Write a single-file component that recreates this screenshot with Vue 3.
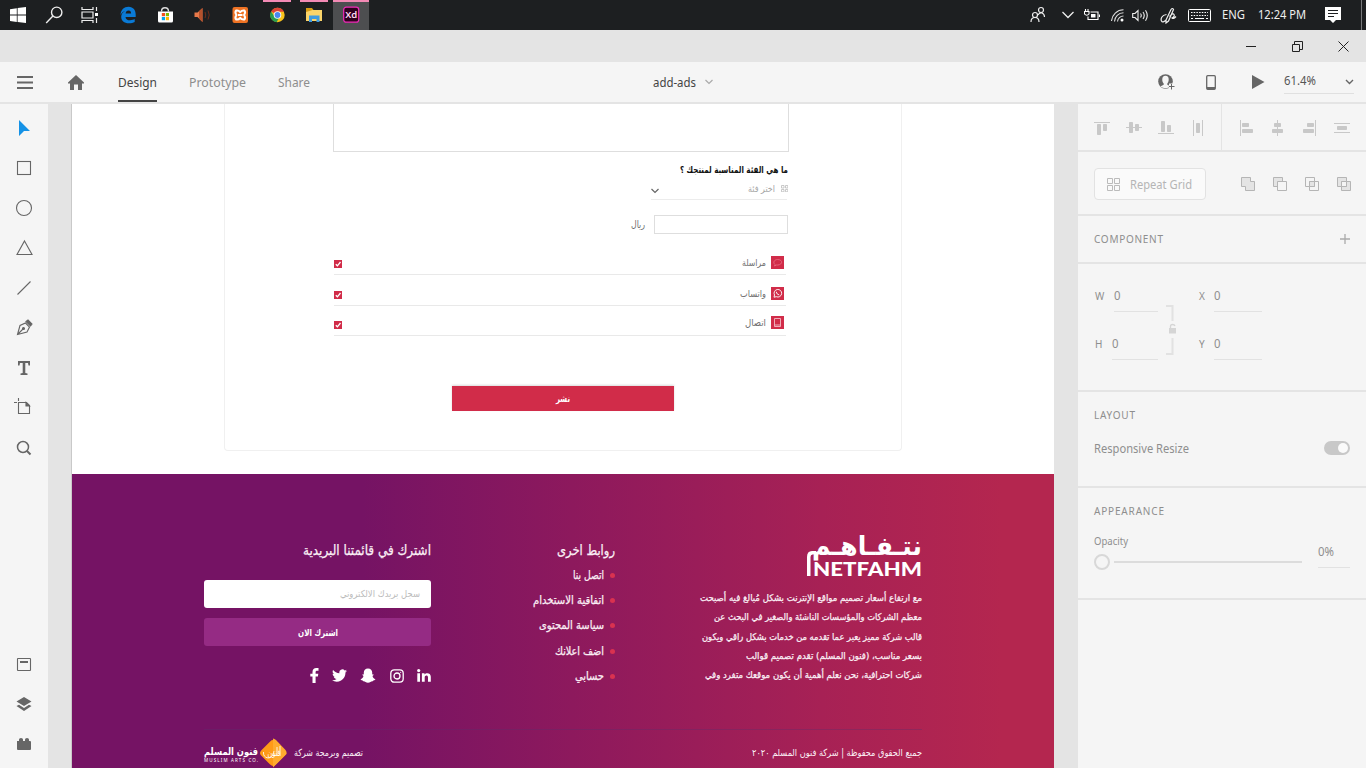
<script setup>
import { h } from 'vue'

// Single line of text fitted to a given width: w/h box, b baseline, s font size,
// adj chooses between stretching glyphs and only spacing them.
const Fit = (p) =>
  h('svg', { width: p.w, height: p.h, style: { display: 'block', overflow: 'visible', flex: 'none' } }, [
    h('text', {
      x: p.w / 2, y: p.b, 'text-anchor': 'middle', 'font-size': p.s, fill: 'currentColor',
      textLength: p.w, lengthAdjust: p.adj || 'spacingAndGlyphs'
    }, p.t)
  ])
Fit.props = ['t', 'w', 'h', 'b', 's', 'adj']

const alignA = [
  { l: 'M0 2.5H16', r: [[3, 4, 4, 11], [9, 4, 4, 7]] },
  { l: 'M0 7.5H16', r: [[3, 2, 4, 11], [9, 4, 4, 7]] },
  { l: 'M0 13.5H16', r: [[3, 1, 4, 11], [9, 5, 4, 7]] },
  { l: 'M3.5 0V16M12.5 0V16', r: [[6, 3, 4, 10]] }
]
const alignB = [
  { l: 'M2.5 0V16', r: [[4, 3, 7, 4], [4, 9, 11, 4]] },
  { l: 'M7.5 0V16', r: [[4, 3, 7, 4], [2, 9, 11, 4]] },
  { l: 'M13.5 0V16', r: [[5, 3, 7, 4], [1, 9, 11, 4]] },
  { l: 'M0 3.5H16M0 12.5H16', r: [[3, 6, 10, 4]] }
]
const fields = [
  { k: 'W', c: 'fw' }, { k: 'X', c: 'fx' }, { k: 'H', c: 'fh' }, { k: 'Y', c: 'fx' }
]
const options = [
  { t: 'مراسلة', w: 24, k: 'chat' },
  { t: 'واتساب', w: 26, k: 'whats' },
  { t: 'اتصال', w: 21, k: 'phone' }
]
const links = [
  { t: 'اتصل بنا', w: 31 }, { t: 'اتفاقية الاستخدام', w: 71 }, { t: 'سياسة المحتوى', w: 65 },
  { t: 'اضف اعلانك', w: 49 }, { t: 'حسابي', w: 29 }
]
const about = [
  { t: 'مع ارتفاع أسعار تصميم مواقع الإنترنت بشكل مُبالغ فيه أصبحت', w: 222 },
  { t: 'معظم الشركات والمؤسسات الناشئة والصغير في البحث عن', w: 208 },
  { t: 'قالب شركة مميز يعبر عما تقدمه من خدمات بشكل راقي ويكون', w: 220 },
  { t: 'بسعر مناسب، (فنون المسلم) تقدم تصميم قوالب', w: 176 },
  { t: 'شركات احترافية، نحن نعلم أهمية أن يكون موقعك متفرد وفي', w: 217 }
]
</script>

<template>
  <div class="screen">
    <header class="taskbar">
      <div class="cell s"><svg width="24" height="24"><path fill="#fff" d="M4 6.2 10.8 5.200V11.600H4zM11.600 5.100 20 4V11.600H11.600zM4 12.400H10.800V18.900L4 17.900zM11.600 12.400H20V20L11.600 19z"/></svg></div>
      <div class="cell s"><svg width="24" height="24" fill="none" stroke="#eee" stroke-width="1.400"><circle cx="13.700" cy="9.300" r="5.200"/><path d="M9.900 13.100 3.200 20"/></svg></div>
      <div class="cell s"><svg width="24" height="24" fill="none" stroke="#eee" stroke-width="1.200"><path d="M3 4V6.500H14V4M3 20V17.500H14V20M3 9H14V15H3zM17.500 4V8M17.500 15V20"/><path d="M16 10h3v3h-3z" fill="#fff" stroke="none"/></svg></div>
      <div class="cell"><svg width="24" height="24"><path fill="#0a7ad6" d="M4.500 12C5 6.500 8 3.800 12.500 3.800c5 0 7.200 3.700 7.200 7.700V14H9.500c.2 2.500 2 3.300 4.500 3.300 2 0 3.600-.5 4.700-1.200V19c-1.500.8-3.500 1.300-5.700 1.300-5 0-7.800-2.600-7.800-6.500 0-2.700 1.500-4.700 4-5.800C7.300 8.500 5.500 9.700 4.500 12zM9.600 10.600h5.500c0-2-.8-3.100-2.500-3.100-1.800 0-2.700 1.200-3 3.100z"/></svg></div>
      <div class="cell"><svg width="24" height="24"><path d="M8.500 8.500C8.500 3.500 15.500 3.500 15.500 8.500" fill="none" stroke="#ddd" stroke-width="1.400"/><path fill="#fff" d="M5 8.500h15v9.500a1.500 1.500 0 0 1-1.500 1.500h-12a1.500 1.500 0 0 1-1.500-1.500z"/><path fill="#f25022" d="M8.800 10h3.200v3.200H8.800z"/><path fill="#7fba00" d="M12.800 10H16v3.200h-3.200z"/><path fill="#00a4ef" d="M8.800 14H12v3.200H8.800z"/><path fill="#ffb900" d="M12.800 14H16v3.200h-3.200z"/></svg></div>
      <div class="cell"><svg width="24" height="24"><path fill="#e8794a" d="M4.500 9.500H7.500L12.500 5V19L7.500 14H4.500z"/><path fill="#b5512c" d="M9 8.200 12.500 5V19L9 15.500z"/><path d="M15 9q1.500 3 0 6M18 7.500q2.500 4.500 0 9" stroke="#6b2c1a" fill="none"/></svg></div>
      <div class="cell"><svg class="nudge" width="24" height="24"><rect x="4.500" y="4" width="15.500" height="16" rx="2" fill="#ee7223"/><path fill="none" stroke="#fff" stroke-width="2" stroke-linejoin="round" d="M12.200 9.200Q10.500 7 8.200 7.500 6.500 9.500 8.500 12 6.500 14.500 8.200 16.500 10.500 17 12.200 14.800 14 17 16.300 16.500 18 14.500 16 12 18 9.500 16.300 7.500 14 7 12.200 9.200zM10 12H14.500"/></svg></div>
      <div class="cell on"><svg width="24" height="24"><circle cx="12.500" cy="12" r="7.200" fill="#f8c21a"/><path fill="#de4436" d="M12.500 12 6 8.500a7.300 7.300 0 0 1 13 .3H12.500z"/><path fill="#2a9d4f" d="M6 8.500a7.200 7.200 0 0 0 5.600 10.700L14.500 14 10 14z"/><circle cx="12.500" cy="12" r="3.800" fill="#fff"/><circle cx="12.500" cy="12" r="2.900" fill="#4a88ee"/></svg></div>
      <div class="cell on"><svg width="24" height="24"><path fill="#d79b14" d="M4 5h6l1.500 2v3H4z"/><path fill="#fad46a" d="M4 9 10.500 7H20v11H4z"/><path fill="#3f9be0" d="M7 12.500h10.500V19h-3v-3H10v3H7z"/></svg></div>
      <div class="cell on active"><svg width="24" height="24"><rect x="4.700" y="4.200" width="15" height="15" rx="2.500" fill="#2e001e" stroke="#f02bb8" stroke-width="1.200"/><text x="12.200" y="15.300" text-anchor="middle" font-size="9.500" font-weight="600" fill="#ffd9f2">Xd</text></svg></div>
      <div class="tray">
        <svg class="t1" width="16" height="18" fill="none" stroke="#eee" stroke-width="1.200"><circle cx="5" cy="9" r="2.500"/><path d="M1 16c0-6 8-6 8 0"/><circle cx="11" cy="4" r="2.500"/><path d="M8 9c2-4 6.500-2 6.500 2"/></svg>
        <svg class="t2" width="12" height="8" fill="none" stroke="#eee" stroke-width="1.300"><path d="M.5 1 6 6.500 11.500 1"/></svg>
        <svg class="t3" width="16" height="13" fill="none" stroke="#fff" stroke-width="1.100"><path d="M6.500 3H14V10.500H4V7.500M15.500 5.500V8M1.500 0V2.500M4 0V2.500M.5 2.500H5V5Q2.700 7.500.5 5z"/><path d="M7 5h4.500v3.500H7z" fill="#fff" stroke="none"/></svg>
        <svg class="t4" width="13" height="13" fill="none" stroke="#ddd" stroke-width="1.100"><path d="M.5 12A12 12 0 0 1 12.500.8M3.500 12.500A9 9 0 0 1 12.500 3.800M6.500 12.500A6 6 0 0 1 12.500 7"/><circle cx="11" cy="11" r="1.500" fill="#fff" stroke="none"/></svg>
        <svg class="t5" width="17" height="13" fill="none" stroke="#eee" stroke-width="1.100"><path d="M.7 4.500H3L6 1.500V11.500L3 8.500H.7zM8.500 4.500q1.500 2 0 4M11 3q2.500 3.500 0 7M13.500 1.200q3.500 5.300 0 10.600"/></svg>
        <svg class="t6" width="17" height="17" fill="none" stroke="#eee" stroke-width="1.200"><path d="M6 13 11 2.500Q12.500.5 13.500 2.500L8.500 14 6 16zM6.500 7.500C1.500 8 .5 12 1.500 14S5 14 6 13M9.500 9.500Q13 5.500 14 7.500T12 11Q13.500 12.500 16 9.500"/></svg>
        <svg class="t7" width="23" height="13" fill="none" stroke="#fff"><rect x=".5" y=".5" width="22" height="12" rx="1"/><path d="M3 3.500H20M3 6.500H20" stroke-dasharray="1.500 1.200"/><path d="M3 9.500H5M7 9.500H16M18 9.500H20"/></svg>
        <Fit class="t8" t="ENG" :w="23" :h="18" :b="13.300" :s="12.500" />
        <Fit class="t9" t="12:24 PM" :w="48" :h="18" :b="13.300" :s="12.500" />
        <svg class="t10" width="16" height="16"><path fill="#fff" d="M0 0h16v13h-5l-3 3-3-3H0z"/><path stroke="#1d1f21" d="M3 3.500H13M3 6.500H13M3 9.500H9"/></svg>
        <i class="peek"></i>
      </div>
    </header>

    <div class="titlebar">
      <svg width="10" height="10" stroke="#222"><path d="M0 5.500H10"/></svg>
      <svg width="11" height="11" fill="none" stroke="#222"><path d="M.5 3.500H7.500V10.500H.5zM2.500 3V.5H10.500V8.500H8"/></svg>
      <svg width="11" height="11" fill="none" stroke="#222"><path d="M.5.500 10.500 10.500M10.500.5.500 10.500"/></svg>
    </div>

    <nav class="toolbar">
      <svg class="burger" width="16" height="13" stroke="#666" stroke-width="1.800"><path d="M0 1H16M0 6.500H16M0 12H16"/></svg>
      <svg class="home" width="16" height="15" fill="#666"><path d="M8 0 16 7.500V8.500H14V15H10V9.500H6V15H2V8.500H0V7.500z"/></svg>
      <div class="tab cur"><Fit t="Design" :w="39" :h="20" :b="15.500" :s="13.300" /></div>
      <div class="tab"><Fit t="Prototype" :w="57" :h="20" :b="15.500" :s="13.300" /></div>
      <div class="tab"><Fit t="Share" :w="32" :h="20" :b="15.500" :s="13.300" /></div>
      <div class="doc"><Fit t="add-ads" :w="43" :h="20" :b="14.800" :s="12.500" /><svg width="8" height="6" fill="none" stroke="#aaa" stroke-width="1.200"><path d="M.5 1 4 4.500 7.500 1"/></svg></div>
      <div class="actions">
        <svg width="18" height="16"><circle cx="7.500" cy="7.500" r="7.300" fill="#666"/><path fill="#f5f5f5" d="M7.500 1.800c4.500 0 3.500 6.500 1.800 7.700v1.200l3.500 1.800q-5.300 3.500-10.600 0l3.500-1.800V9.500C4 8.300 3 1.800 7.500 1.800z"/><path fill="#f5f5f5" d="M11 9.500h7v6.500h-7z"/><path stroke="#666" d="M11 12.500H16.500M13.500 10V15.500"/></svg>
        <svg class="mob" width="10" height="15"><rect x=".7" y=".7" width="8.600" height="13.600" rx="1" fill="none" stroke="#666" stroke-width="1.300"/><path d="M1 12H9V14H1z" fill="#666"/></svg>
        <svg class="play" width="13" height="14" fill="#666"><path d="M0 0 12.500 7 0 14z"/></svg>
        <div class="zoom"><Fit t="61.4%" :w="32" :h="18" :b="13.500" :s="12.500" /><svg width="9" height="6" fill="none" stroke="#666" stroke-width="1.400"><path d="M1 1 4.500 4.500 8 1"/></svg></div>
      </div>
    </nav>

    <main class="work">
      <aside class="tools">
        <svg width="24" height="24"><path fill="#1592e6" d="M7 4 18 15H12L7 20z"/></svg>
        <svg width="24" height="24" class="ln"><rect x="5.500" y="5.500" width="13" height="13"/></svg>
        <svg width="24" height="24" class="ln"><circle cx="12" cy="12" r="7.500"/></svg>
        <svg width="24" height="24" class="ln"><path d="M12.500 5 20 18.500H5z"/></svg>
        <svg width="24" height="24" class="ln"><path d="M5.500 18.500 18.500 5.500"/></svg>
        <svg width="24" height="24" class="ln"><path d="M5.500 18.500 8 9.500 13.500 7 17.500 11 15 16zM5.500 18.500 11 13"/><circle cx="11.500" cy="12.500" r="1" fill="#666"/><path d="M14 5.500 16 4 20 8 18.500 10z" fill="#666"/></svg>
        <svg width="24" height="24"><path fill="#666" d="M6 5H18V9.500H16.500L16 7H13.300V17L15.500 17.500V19H8.500V17.500L10.700 17V7H8L7.500 9.500H6z"/></svg>
        <svg width="24" height="24" class="ln"><path d="M6.500 6.500H14.500L17.500 9.500V17.500H6.500zM14.500 6.500V9.500H17.500M2 6.500H5M6.500 2V5"/><path d="M14 6.500 17.500 10H14z" fill="#666"/></svg>
        <svg width="24" height="24" class="ln"><circle cx="11" cy="11" r="5.500" stroke-width="1.500"/><path d="M15 15 18.500 18.500" stroke-width="2"/></svg>
        <div class="bottom">
          <svg width="24" height="24" class="ln"><rect x="5.500" y="6.500" width="13" height="12" rx=".5"/><path d="M8 10H16" stroke-width="2"/></svg>
          <svg width="24" height="24" fill="#666"><path d="M12 5 19.500 9.500 12 14 4.500 9.500zM4.500 14 7 12.700 12 16 17 12.700 19.500 14 12 19z"/></svg>
          <svg width="24" height="24" fill="#666"><path d="M5 9H7V7.500Q7 6 9 6T11 7.500V9H13V7.500Q13 6 15 6T17 7.500V9H18Q19 9 19 10V17Q19 18 18 18H6Q5 18 5 17z"/></svg>
        </div>
      </aside>

      <section class="canvas">
        <div class="artboard">
          <div class="card">
            <div class="area"></div>
            <Fit class="question ar" t="ما هي الفئة المناسبة لمنتجك ؟" :w="108" :h="14" :b="10" :s="9.300" />
            <div class="select">
              <svg class="chev" width="8" height="6" fill="none" stroke="#666" stroke-width="1.200"><path d="M.5 1 4 4.500 7.500 1"/></svg>
              <Fit class="ar" t="اختر فئة" :w="27" :h="12" :b="8" :s="9.500" />
              <svg class="grid" width="7" height="7" fill="none" stroke="#bbb" stroke-width=".8"><path d="M.5.500H3V3H.5zM4.500.5H6.800V3H4.500zM.5 4.500H3V6.800H.5zM4.500 4.500H6.800V6.800H4.500z"/></svg>
            </div>
            <div class="price"><Fit class="ar" t="ريال" :w="14" :h="14" :b="9.500" :s="10" /><div class="box"></div></div>
            <div class="opts">
              <div v-for="o in options" :key="o.k" class="opt" :class="o.k">
                <svg class="check" width="8" height="8"><path fill="#d12c49" d="M0 0h8v8H0z"/><path d="M1.800 4.200 3.400 5.800 6.500 2" fill="none" stroke="#fff" stroke-width="1.300"/></svg>
                <Fit class="ar" :t="o.t" :w="o.w" :h="13" :b="9.500" :s="9.800" />
                <svg width="13" height="13" fill="none" stroke="#f3b9c4" stroke-width=".9"><path d="M0 0h13v13H0z" fill="#d12c49" stroke="none"/>
                  <path v-if="o.k === 'chat'" stroke="#e8697f" d="M3.500 10 4 8.500C1.500 6.500 3.500 3.500 6.500 3.500S11 5 10.500 6.800 7 9.300 5.500 9z"/>
                  <g v-else-if="o.k === 'whats'" stroke="#fff"><path d="M3 10.200 3.500 8A3.800 3.800 0 1 1 5.300 9.700z"/><path d="M5.200 4.700Q5.500 7.500 8.300 8"/></g>
                  <path v-else d="M3.500 2.500H9.500V10.500H3.500zM3.500 9H9.500"/>
                </svg>
              </div>
            </div>
            <div class="publish"><Fit class="ar" t="نشر" :w="14" :h="14" :b="10.500" :s="9.500" /></div>
          </div>

          <footer class="foot">
            <div class="cols">
              <div class="news">
                <Fit class="ar" t="اشترك في قائمتنا البريدية" :w="128" :h="20" :b="13" :s="14" />
                <div class="mail"><Fit class="ar" t="سجل بريدك الالكتروني" :w="80" :h="16" :b="11" :s="9.500" /></div>
                <div class="sub"><Fit class="ar" t="اشترك الان" :w="40" :h="16" :b="11.500" :s="9.300" /></div>
                <div class="social">
                  <svg width="9" height="15" fill="#fff"><path d="M2.500 15V8.500H.3V5.700H2.500V4C2.500 1.300 4 0 6.300 0 7.500 0 8.500.1 8.500.1V2.700H7.200C6 2.700 5.600 3.300 5.600 4.100V5.700H8.300L7.900 8.500H5.600V15z"/></svg>
                  <svg width="15" height="13" viewBox="0 2 24 20" fill="#fff"><path d="M24 4.600c-.9.400-1.800.7-2.800.8 1-.6 1.800-1.600 2.200-2.700-1 .6-2 1-3.100 1.200A4.900 4.900 0 0 0 11.900 8.400C7.800 8.200 4.200 6.200 1.700 3.200.4 5.400 1 8.300 3.200 9.700c-.8 0-1.600-.2-2.200-.6 0 2.300 1.600 4.400 3.900 4.900-.7.200-1.500.2-2.200.1.600 2 2.400 3.400 4.600 3.400A9.900 9.900 0 0 1 0 19.500 14 14 0 0 0 21.500 7.100c1-.7 1.800-1.600 2.500-2.500z"/></svg>
                  <svg width="16" height="15" fill="#fff"><path d="M8 .5C10.700.5 12.200 2.300 12.200 4.500V6.500L13.300 6.300 13.600 7 12.500 8C13 9.800 13.800 10.600 15.500 11.200 15 12.200 13.600 12.300 13.200 12.500L12.800 13.300C11 13 10.300 14.800 8 14.800S5 13 3.200 13.300L2.800 12.500C2.400 12.300 1 12.200.5 11.200 2.200 10.600 3 9.800 3.500 8L2.400 7 2.700 6.300 3.800 6.500V4.500C3.800 2.300 5.300.5 8 .5z"/></svg>
                  <svg width="14" height="14" fill="none" stroke="#fff" stroke-width="1.300"><rect x=".8" y=".8" width="12.400" height="12.400" rx="3.400"/><circle cx="7" cy="7" r="3"/><circle cx="10.700" cy="3.300" r=".6" fill="#fff" stroke="none"/></svg>
                  <svg width="14" height="13" fill="#fff"><path d="M.3 4.300H3V12.800H.3zM4.900 4.300H7.500V5.500C8.800 3.400 13.800 3.400 13.800 7.700V12.800H11V8.400C11 5.700 7.700 6 7.700 8.400V12.800H4.900z"/><circle cx="1.700" cy="1.600" r="1.600"/></svg>
                </div>
              </div>
              <div class="links">
                <Fit class="ar head" t="روابط اخرى" :w="58" :h="20" :b="13" :s="14" />
                <div v-for="l in links" :key="l.t" class="link"><Fit class="ar" :t="l.t" :w="l.w" :h="25" :b="16" :s="11.300" /><i></i></div>
              </div>
              <div class="about">
                <svg class="logo" width="115" height="42" fill="#fff">
                  <text class="ar" x="60" y="19.500" text-anchor="middle" font-size="26" font-weight="700" textLength="110" lengthAdjust="spacingAndGlyphs">نتـفـاهـم</text>
                  <path d="M0 41V22Q0 16 5 16H9V19.500H5.500Q3.500 19.500 3.500 22V41z"/>
                  <text x="60.500" y="41" text-anchor="middle" font-size="19.500" font-weight="900" font-family="Lato, sans-serif" textLength="109" lengthAdjust="spacingAndGlyphs">NETFAHM</text>
                </svg>
                <Fit v-for="a in about" :key="a.t" class="ar" :t="a.t" :w="a.w" :h="19.300" :b="11.800" :s="9.300" />
              </div>
            </div>
            <div class="legal">
              <div class="brand">
                <Fit class="ar bold" t="فنون المسلم" :w="54" :h="16" :b="11" :s="10.500" />
                <Fit t="MUSLIM ARTS CO." :w="54" :h="6" :b="2" :s="4.500" adj="spacing" />
              </div>
              <svg class="gem" width="28" height="30"><rect x="3.800" y="4.800" width="20.400" height="20.400" rx="4" fill="#ff9a17" transform="rotate(45 14 15)"/><path d="M14 15V.5Q15.500.5 17 2L26.500 12Q28 14 27.500 16L14 29.500z" fill="#ffab2e"/><text class="ar" x="15" y="17.500" text-anchor="middle" font-size="10" fill="#fff" textLength="13" lengthAdjust="spacingAndGlyphs">فنون</text><path d="M4.500 14Q4 19 9 20 14 20 15 13M18 9V18M21 8V18" fill="none" stroke="#fff0d8" stroke-width="1"/></svg>
              <Fit class="ar by" t="تصميم وبرمجة شركة" :w="69" :h="16" :b="11" :s="9.800" />
              <Fit class="ar copy" t="جميع الحقوق محفوظة | شركة فنون المسلم ٢٠٢٠" :w="170" :h="16" :b="11" :s="9.800" />
            </div>
          </footer>
        </div>
      </section>

      <aside class="panel">
        <div class="sec align">
          <div class="grp"><svg v-for="(a, i) in alignA" :key="i" width="16" height="16"><path :d="a.l" stroke="#c8c8c8"/><rect v-for="(r, j) in a.r" :key="j" :x="r[0]" :y="r[1]" :width="r[2]" :height="r[3]" rx=".8" fill="#c8c8c8"/></svg></div>
          <div class="grp second"><svg v-for="(a, i) in alignB" :key="i" width="16" height="16"><path :d="a.l" stroke="#c8c8c8"/><rect v-for="(r, j) in a.r" :key="j" :x="r[0]" :y="r[1]" :width="r[2]" :height="r[3]" rx=".8" fill="#c8c8c8"/></svg></div>
        </div>
        <div class="sec repeat">
          <div class="btn"><svg width="13" height="13" fill="none" stroke="#bbb"><path d="M.5.500H5.500V5.500H.5zM7.500.5H12.500V5.500H7.500zM.5 7.500H5.500V12.500H.5zM7.500 7.500H12.500V12.500H7.500z"/></svg><Fit t="Repeat Grid" :w="62" :h="18" :b="14" :s="12.800" /></div>
          <div class="bool">
            <svg width="14" height="14"><path d="M.5.500H9.500V4.500H13.500V13.500H4.500V9.500H.5z" fill="#e4e4e4"/></svg>
            <svg width="14" height="14"><path d="M.5.500H9.500V9.500H.5z" fill="#e4e4e4"/><path d="M4.500 4.500H13.500V13.500H4.500z" fill="#f5f5f5"/></svg>
            <svg width="14" height="14" fill="none"><path d="M.5.500H9.500V9.500H.5zM4.500 4.500H13.500V13.500H4.500z"/><path d="M4.500 4.500H9.500V9.500H4.500z" fill="#e4e4e4"/></svg>
            <svg width="14" height="14"><path d="M.5.500H9.500V9.500H.5zM4.500 4.500H13.500V13.500H4.500z" fill="#e4e4e4"/><path d="M4.500 4.500H9.500V9.500H4.500z" fill="#f5f5f5"/></svg>
          </div>
        </div>
        <div class="sec comp"><Fit t="COMPONENT" :w="69" :h="16" :b="12" :s="10" adj="spacing" /><svg width="10" height="10" stroke="#aaa" stroke-width="1.300"><path d="M0 5H10M5 0V10"/></svg></div>
        <div class="sec size">
          <div class="fields">
            <div v-for="f in fields" :key="f.k" class="field" :class="f.c"><span class="k">{{ f.k }}</span><div class="v"><Fit t="0" :w="6.500" :h="16" :b="13" :s="12.300" /></div></div>
          </div>
          <svg class="lock" width="11" height="50" fill="none" stroke="#e2e2e2" stroke-width="2"><path d="M0 1H6.500V16M0 49H6.500V33"/><path d="M4.500 23V21.500Q4.500 19.500 6.500 19.500T9 21" stroke="#d5d5d5" stroke-width="1.300"/><path d="M3 23H10V28.500H3z" fill="#d5d5d5" stroke="none"/></svg>
        </div>
        <div class="sec layout">
          <Fit t="LAYOUT" :w="41" :h="16" :b="12" :s="10" adj="spacing" />
          <div class="row"><Fit t="Responsive Resize" :w="95" :h="18" :b="13" :s="12.500" /><div class="toggle"><i></i></div></div>
        </div>
        <div class="sec look">
          <Fit t="APPEARANCE" :w="70" :h="16" :b="12" :s="10" adj="spacing" />
          <div class="row">
            <div class="slide"><Fit t="Opacity" :w="34" :h="14" :b="10" :s="10" /><div class="rail"><b></b><i></i></div></div>
            <div class="pct"><Fit t="0%" :w="16" :h="18" :b="13" :s="12.300" /></div>
          </div>
        </div>
      </aside>
    </main>
  </div>
</template>

<style>
body { background: #f5f5f5; overflow: hidden; }
</style>

<style scoped>
* { box-sizing: border-box; }
svg { display: block; flex: none; }
.screen { width: 1366px; height: 768px; display: flex; flex-direction: column; overflow: hidden; font-family: "Noto Sans", "Open Sans", sans-serif; background: #f5f5f5; }
.ar { font-family: "DejaVu Sans", sans-serif; direction: rtl; }
.bold { font-weight: 700; }

.taskbar { height: 30px; background: #1d1f21; display: flex; flex: none; color: #f0f0f0; }
.cell { width: 37px; height: 30px; display: flex; align-items: center; justify-content: center; }
.cell.s { width: 36.600px; }
.nudge { margin-left: 1px; }
.cell.on { position: relative; left: 1px; background: linear-gradient(#f38ab5, #f38ab5) 50% 0 / 28px 2px no-repeat; }
.cell.active { width: 36px; background: linear-gradient(#f38ab5, #f38ab5) 50% 0 / 37px 2px no-repeat, #4d4e50; }
.tray { display: flex; align-items: center; margin-left: auto; height: 30px; }
.t2 { margin-left: 16px; } .t3 { margin-left: 10px; } .t4 { margin-left: 11px; } .t5 { margin-left: 8px; }
.t6 { margin-left: 11px; } .t7 { margin-left: 11px; } .t8 { margin-left: 11px; } .t9 { margin-left: 13px; } .t10 { margin-left: 19px; }
.peek { width: 1px; height: 30px; background: #77797b; margin: 0 4px 0 20px; }

.titlebar { height: 32px; background: #e4e4e4; flex: none; display: flex; align-items: center; justify-content: flex-end; gap: 35.500px; padding-right: 17px; }

.toolbar { height: 42px; flex: none; border-bottom: 2px solid #e4e4e4; background: #f5f5f5; display: flex; align-items: center; color: #8e8e8e; }
.burger { margin-left: 17px; }
.home { margin-left: 35px; margin-right: 34px; }
.tab { height: 40px; padding-top: 9px; margin-right: 32px; border-bottom: 2px solid transparent; }
.tab.cur { color: #444; border-color: #444; }
.doc { margin-left: 311px; display: flex; align-items: center; gap: 9px; color: #444; }
.actions { margin-left: auto; display: flex; align-items: center; padding-right: 12px; }
.mob { margin-left: 30px; }
.play { margin-left: 36px; }
.zoom { margin-left: 19px; width: 70px; height: 23px; border-bottom: 1px solid #e0e0e0; display: flex; justify-content: space-between; color: #555; align-items: flex-start; }
.zoom > svg:last-child { margin-top: 8px; }

.work { flex: 1; display: flex; min-height: 0; }
.tools { width: 48px; background: #f5f5f5; display: flex; flex-direction: column; align-items: center; gap: 16px; padding: 12px 0; }
.tools .bottom { margin-top: auto; display: flex; flex-direction: column; gap: 16px; }
.ln { fill: none; stroke: #666; stroke-width: 1.100px; }
.canvas { width: 1030px; background: #e4e4e4; padding-left: 23px; }
.artboard { width: 983px; height: 664px; border-left: 1px solid #c9c9c9; background: #fff; display: flex; flex-direction: column; overflow: hidden; }
.card { width: 678px; height: 347px; margin-left: 152px; border: 1px solid #f0f0f0; border-top: 0; border-radius: 0 0 4px 4px; padding-left: 108px; color: #6e6e6e; flex: none; }
.area { width: 456px; height: 48px; border: 1px solid #dedede; border-top: 0; }
.question { margin: 11px 0 0 347px; color: #111; font-weight: 700; }
.select { margin: 7px 0 0 318px; width: 136px; height: 16px; border-bottom: 1px solid #ececec; display: flex; align-items: flex-start; gap: 5px; color: #a5a5a5; }
.select .chev { margin: 4px auto 0 0; }
.select .grid { position: relative; left: 1px; top: 1px; }
.price { margin: 15px 0 0 298px; display: flex; align-items: center; gap: 9px; height: 19px; }
.box { width: 134px; height: 19px; border: 1px solid #dedede; }
.opts { width: 452px; margin-left: 1px; padding-top: 22px; }
.opt { height: 30px; border-bottom: 1px solid #e9e9e9; display: flex; align-items: flex-start; gap: 5px; padding-right: 2px; }
.opt.chat { height: 19px; } .opt.whats { height: 31px; padding-top: 12px; } .opt.phone { padding-top: 10px; }
.check { margin: 4px auto 0 0; }
.phone .check { margin-top: 5px; }
.publish { width: 222px; height: 25px; margin: 50px 0 0 119px; background: #d12c49; color: #fff; font-weight: 700; display: flex; justify-content: center; padding-top: 5px; box-shadow: 0 -1px 2px rgba(0, 0, 0, .15); }

.foot { margin-top: 23px; height: 294px; flex: none; padding: 61px 132px 0; color: #fbf0f6; background: linear-gradient(90deg, #751364 0, #751364 290px, #8d195d 500px, #a72155 750px, #b4264f 930px, #b4264f 100%); display: flex; flex-direction: column; }
.links .ar, .about > .ar, .news > .ar { stroke: #fbf0f6; stroke-width: .25px; }
.cols { display: flex; height: 196px; border-bottom: 1px solid rgba(90, 50, 110, .35); width: 718px; }
.news { width: 227px; display: flex; flex-direction: column; align-items: flex-end; padding-top: 7px; }
.mail { width: 227px; height: 28px; margin-top: 18px; background: #fff; border-radius: 3px; display: flex; justify-content: flex-end; padding: 6px 11px 0 0; color: #bbb; }
.sub { width: 227px; height: 28px; margin-top: 10px; background: #952b84; border-radius: 3px; display: flex; justify-content: center; padding-top: 6px; color: #fff; font-weight: 700; }
.social { margin-top: 22px; display: flex; align-items: center; gap: 13.300px; }
.links { margin-left: 94px; width: 90px; display: flex; flex-direction: column; align-items: flex-end; padding-top: 7px; }
.head { margin-bottom: 1px; }
.link { height: 25.200px; display: flex; align-items: center; gap: 6px; }
.link i { width: 5px; height: 5px; border-radius: 50%; background: #d93250; }
.about { margin-left: 85px; width: 222px; display: flex; flex-direction: column; align-items: flex-end; }
.logo { margin-bottom: 12px; overflow: visible; }
.legal { display: flex; align-items: flex-start; padding-top: 8px; width: 718px; }
.brand { padding-top: 6px; color: #fff; }
.gem { margin-left: 1px; overflow: visible; }
.by { margin: 7px 0 0 7px; }
.copy { margin: 7px 0 0 auto; }

.panel { width: 288px; background: #f5f5f5; color: #8e8e8e; }
.sec { border-bottom: 2px solid #e4e4e4; padding: 0 16px; }
.align { height: 48px; display: flex; padding-right: 0; }
.grp { display: flex; flex: none; gap: 16px; padding-top: 16px; width: 128px; }
.grp.second { border-left: 1px solid #e4e4e4; margin-left: -1px; padding-left: 16px; width: 145px; }
.repeat { height: 64px; display: flex; align-items: center; justify-content: space-between; color: #b5b5b5; padding-right: 15px; }
.btn { width: 112px; height: 32px; margin-top: 2px; border: 1px solid #e2e2e2; border-radius: 4px; background: #fafafa; display: flex; align-items: center; gap: 10px; padding-left: 12px; }
.bool { display: flex; gap: 18px; stroke: #b5b5b5; margin-top: 2px; }
.comp { height: 48px; display: flex; align-items: center; justify-content: space-between; }
.size { height: 128px; position: relative; }
.fields { display: grid; grid-template-columns: 104px 64px; grid-auto-rows: 48px; padding-top: 24px; }
.field { display: flex; }
.k { font-size: 10px; width: 20px; padding-left: 1px; line-height: 17px; }
.v { width: 44px; height: 25px; border-bottom: 1px solid #e2e2e2; margin-top: -1px; }
.fx .k { width: 16px; } .fx .v { width: 48px; }
.fh .k { width: 18px; } .fh .v { width: 46px; }
.lock { position: absolute; left: 88px; top: 41px; }
.layout { height: 96px; padding-top: 15px; }
.row { display: flex; justify-content: space-between; }
.layout .row { margin-top: 17px; }
.toggle { width: 26px; height: 14px; border-radius: 7px; background: #c8c8c8; padding: 2px; display: flex; justify-content: flex-end; margin-top: 1px; }
.toggle i { width: 10px; height: 10px; border-radius: 50%; background: #fafafa; }
.look { height: 112px; padding-top: 15px; }
.look .row { margin-top: 16px; }
.rail { display: flex; align-items: center; gap: 4px; margin-top: 5px; }
.rail b { width: 16px; height: 16px; border: 2px solid #d8d8d8; border-radius: 50%; }
.rail i { width: 188px; height: 2px; background: #dcdcdc; }
.pct { width: 32px; margin-top: 8px; height: 25px; border-bottom: 1px solid #e2e2e2; }
</style>
